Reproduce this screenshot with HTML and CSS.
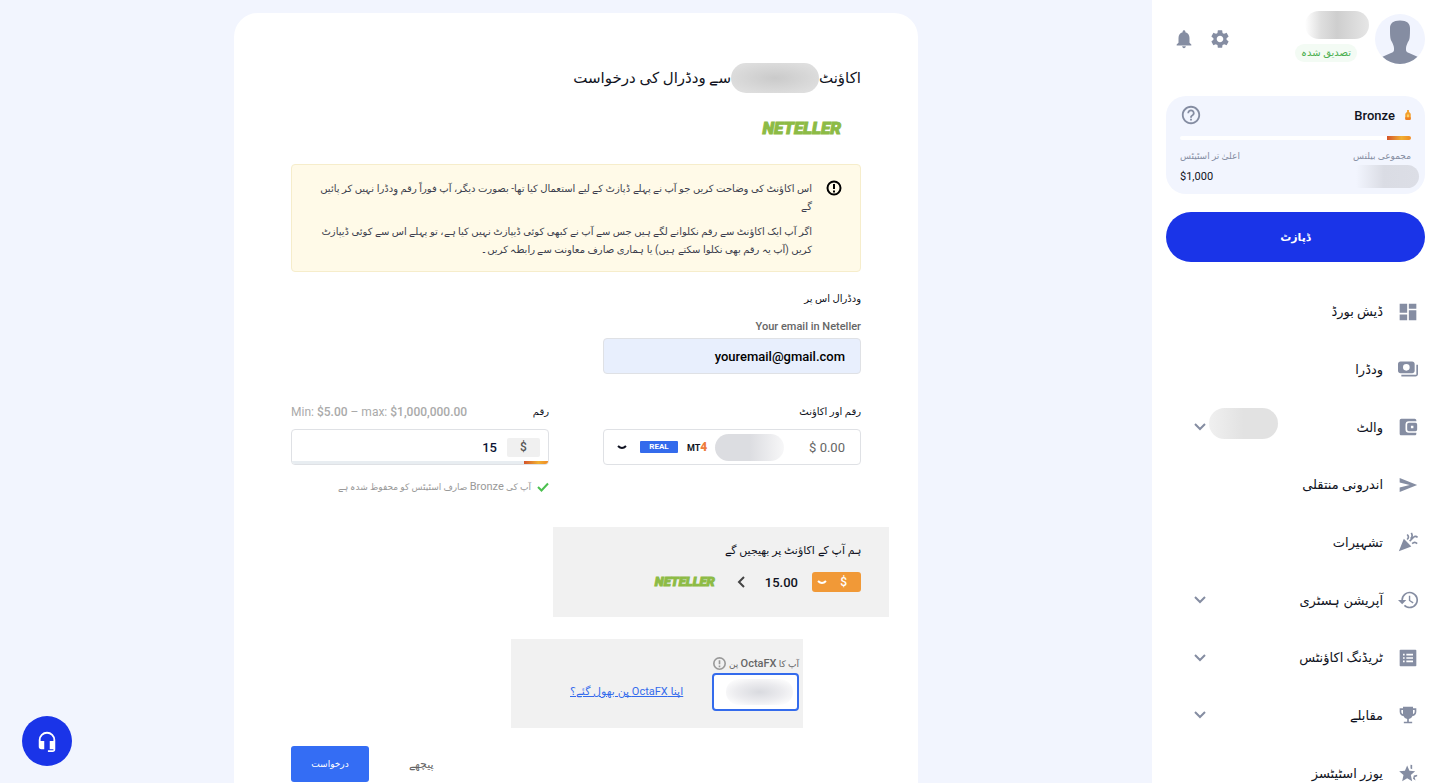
FILE: index.html
```html
<!DOCTYPE html>
<html lang="ur" dir="rtl">
<head>
    <meta charset="UTF-8">
    <meta name="viewport" content="width=device-width, initial-scale=1.0">
    <title>OctaFX</title>
    <link rel="stylesheet" href="styles.css">
</head>
<body>
<div class="page">

    <aside class="sidebar">
        <div class="profile">
            <svg class="avatar" viewBox="0 0 50 50">
                <circle cx="25" cy="25" r="25" fill="#f1f4fe"/>
                <path fill="#858da2" d="M25 6.500c-7 0-10 3-10 7.500 0 4 0 7 .4 10 .4 2.500 1.600 3.500 2.100 5 .8 2.500 1.500 3 1.500 5.500V36c0 1.500-1 2.300-3 3L7.500 42.800A25 25 0 0 0 42.500 42.800L34 39c-2-.7-3-1.500-3-3v-1.500c0-2.500.7-3 1.500-5.500.5-1.500 1.700-2.500 2.100-5 .4-3 .4-6 .4-10 0-4.500-3-7.500-10-7.500z"/>
            </svg>
            <div class="user">
                <span class="mask mask-name"></span>
                <span class="verified">تصدیق شدہ</span>
            </div>
            <button class="icon-btn" aria-label="Settings">
                <svg viewBox="0 0 24 24"><path d="M19.140 12.940c.04-.3.060-.61.060-.94s-.02-.64-.07-.94l2.030-1.580c.18-.14.230-.41.120-.61l-1.920-3.320c-.12-.22-.37-.29-.59-.22l-2.390.96c-.5-.38-1.030-.7-1.620-.94l-.36-2.540c-.04-.24-.24-.41-.48-.41h-3.840c-.24 0-.43.17-.47.41l-.36 2.540c-.59.24-1.130.57-1.620.94l-2.390-.96c-.22-.08-.47 0-.59.22L2.740 8.870c-.12.21-.08.47.12.61l2.030 1.580c-.05.3-.09.630-.09.940s.02.640.07.940l-2.030 1.580c-.18.140-.23.410-.12.610l1.920 3.320c.12.220.37.290.59.220l2.390-.96c.5.380 1.030.7 1.620.940l.36 2.540c.05.240.24.410.48.410h3.840c.24 0 .44-.17.47-.41l.36-2.540c.59-.24 1.130-.56 1.620-.94l2.390.96c.22.080.47 0 .59-.22l1.920-3.320c.12-.22.070-.47-.12-.61l-2.010-1.580zM12 15.600c-1.980 0-3.600-1.620-3.600-3.600s1.620-3.600 3.600-3.600 3.600 1.620 3.600 3.600-1.620 3.600-3.600 3.600z"/></svg>
            </button>
            <button class="icon-btn" aria-label="Notifications">
                <svg viewBox="0 0 24 24"><path d="M12 22c1.100 0 2-.9 2-2h-4c0 1.100.9 2 2 2zm6-6v-5c0-3.070-1.630-5.640-4.500-6.320V4c0-.83-.67-1.500-1.500-1.500s-1.500.67-1.500 1.500v.68C7.640 5.360 6 7.920 6 11v5l-2 2v1h16v-1l-2-2z"/></svg>
            </button>
        </div>

        <section class="status">
            <div class="status-head">
                <svg class="bronze" viewBox="0 0 6 11"><path d="M2 0h2v2l2 2v5.500Q6 11 4.500 11h-3Q0 11 0 9.500V4l2-2z" fill="#f3a02c"/><path d="M0 8h6v1.500Q6 11 4.500 11h-3Q0 11 0 9.500z" fill="#ee7f25"/><path d="M2 5h2v3H2z" fill="#ffd470"/></svg>
                <strong>Bronze</strong>
                <button class="help" aria-label="Help">
                    <svg viewBox="0 0 24 24"><path d="M11 18h2v-2h-2v2zm1-16C6.480 2 2 6.480 2 12s4.480 10 10 10 10-4.480 10-10S17.520 2 12 2zm0 18c-4.410 0-8-3.590-8-8s3.590-8 8-8 8 3.590 8 8-3.590 8-8 8zm0-14c-2.210 0-4 1.790-4 4h2c0-1.100.9-2 2-2s2 .9 2 2c0 2-3 1.750-3 5h2c0-2.250 3-2.500 3-5 0-2.210-1.790-4-4-4z"/></svg>
                </button>
            </div>
            <div class="bar"><span></span></div>
            <div class="status-row">
                <div>
                    <p>مجموعی بیلنس</p>
                    <span class="mask mask-balance"></span>
                </div>
                <div class="next">
                    <p>اعلیٰ تر اسٹیٹس</p>
                    <span dir="ltr">$1,000</span>
                </div>
            </div>
        </section>

        <button class="deposit">ڈپازٹ</button>

        <nav class="menu">
            <a href="#">
                <svg viewBox="0 0 24 24"><path d="M2 2h9v11H2zM13 2h9v6h-9zM2 15h9v7H2zM13 10h9v12h-9z"/></svg>
                <span>ڈیش بورڈ</span>
            </a>
            <a href="#">
                <svg viewBox="0 0 24 24"><path d="M20 14V6c0-1.700-1.300-3-3-3H3C1.300 3 0 4.300 0 6v8c0 1.700 1.300 3 3 3h14c1.700 0 3-1.300 3-3zm-10 0a4 4 0 1 1 0-8 4 4 0 0 1 0 8zM24 7v11c0 1.700-1.300 3-3 3H4v-2h18V7z"/></svg>
                <span>ودڈرا</span>
            </a>
            <a href="#">
                <svg viewBox="0 0 24 24"><path d="M22 5V4c0-1.100-.9-2-2-2H4a2 2 0 0 0-2 2v16c0 1.100.9 2 2 2h16c1.100 0 2-.9 2-2v-1h-9a4 4 0 0 1-4-4V9a4 4 0 0 1 4-4z"/><path d="M13 7h8a2 2 0 0 1 2 2v6a2 2 0 0 1-2 2h-8a2 2 0 0 1-2-2V9c0-1.100.9-2 2-2zm2.500 3.500v3h3v-3z" fill-rule="evenodd"/></svg>
                <span>والٹ</span>
                <i class="mask mask-wallet"></i>
                <svg class="chevron" viewBox="0 0 12 12"><path d="M1 3l5 5 5-5"/></svg>
            </a>
            <a href="#">
                <svg viewBox="0 0 24 24"><path d="M2 20.500L23 12 2 3.500 2 9l12 3-12 3z"/></svg>
                <span>اندرونی منتقلی</span>
            </a>
            <a href="#">
                <svg viewBox="0 0 24 24"><path d="M1 23l15-5.500L7 8z"/><g class="line"><path d="M14 11l5-5c1-1 3-1 4.500.5M17 14c2-2 4-2 6 0M11 9c2-2 2-4 0-6M15 8c3-2 2-5 1-7"/></g></svg>
                <span>تشہیرات</span>
            </a>
            <a href="#">
                <svg viewBox="0 0 24 24"><path d="M14 2C8.500 2 4 6.500 4 12H0l5 5 5-5H6a8 8 0 1 1 2.400 5.700L7 19.100A10 10 0 1 0 14 2zm-1 5v6l4.700 3.200 1-1.500-4-2.500V7z"/></svg>
                <span>آپریشن ہسٹری</span>
                <svg class="chevron" viewBox="0 0 12 12"><path d="M1 3l5 5 5-5"/></svg>
            </a>
            <a href="#">
                <svg viewBox="0 0 24 24"><path fill-rule="evenodd" d="M3 2h18q1 0 1 1v18q0 1-1 1H3q-1 0-1-1V3q0-1 1-1zm3 5v2h2V7zm4 0v2h8V7zm-4 4v2h2v-2zm4 0v2h8v-2zm-4 4v2h2v-2zm4 0v2h8v-2z"/></svg>
                <span>ٹریڈنگ اکاؤنٹس</span>
                <svg class="chevron" viewBox="0 0 12 12"><path d="M1 3l5 5 5-5"/></svg>
            </a>
            <a href="#">
                <svg viewBox="0 0 24 24"><path fill-rule="evenodd" d="M6 2h12v2h4v4c0 3-2 5-4.500 5.300A6 6 0 0 1 13 16.900V20h4v2H7v-2h4v-3.100a6 6 0 0 1-4.500-3.600C4 13 2 11 2 8V4h4zm0 4H4v2c0 1.300.8 2.400 2 2.800zm12 0v4.800c1.200-.4 2-1.500 2-2.800V6z"/></svg>
                <span>مقابلے</span>
                <svg class="chevron" viewBox="0 0 12 12"><path d="M1 3l5 5 5-5"/></svg>
            </a>
            <a href="#">
                <svg viewBox="0 0 24 24"><path d="M11 3l2.700 6.400 6.900.6-5.200 4.500L17 22l-6-3.800L5 22l1.600-7.500L1.400 10l6.900-.6zM15 2l2 .5v5l-2-1zM19 15l4-1v2l-3 1 1 4-3-2z"/></svg>
                <span>یوزر اسٹیٹسز</span>
            </a>
        </nav>
    </aside>

    <main class="content">
        <form class="card">
            <h1>اکاؤنٹ<span class="mask mask-account"></span>سے ودڈرال کی درخواست</h1>
            <div class="neteller">NETELLER</div>

            <div class="notice">
                <svg class="alert" viewBox="0 0 16 16"><circle cx="8" cy="8" r="6.500"/><path d="M8 4v5M8 10.500v2"/></svg>
                <div>
                    <p>اس اکاؤنٹ کی وضاحت کریں جو آپ نے پہلے ڈپازٹ کے لیے استعمال کیا تھا- بصورت دیگر، آپ فوراً رقم وِدڈرا نہیں کر پائیں گے</p>
                    <p>اگر آپ ایک اکاؤنٹ سے رقم نکلوانے لگے ہیں جس سے آپ نے کبھی کوئی ڈیپازٹ نہیں کیا ہے، تو پہلے اس سے کوئی ڈیپازٹ کریں (آپ یہ رقم بھی نکلوا سکتے ہیں) یا ہماری صارف معاونت سے رابطہ کریں۔</p>
                </div>
            </div>

            <h2>ودڈرال اس پر</h2>
            <div class="columns">
                <div class="field">
                    <label class="small" for="email">Your email in Neteller</label>
                    <input class="box email" type="email" id="email" value="youremail@gmail.com" dir="ltr">
                </div>
            </div>

            <div class="columns amounts">
                <div class="field">
                    <div class="caption"><span id="accountLabel">رقم اور اکاؤنٹ</span></div>
                    <button class="box account" type="button" aria-labelledby="accountLabel">
                        <span class="sum" dir="ltr">$ 0.00</span>
                        <span class="mask mask-number"></span>
                        <span class="mt" dir="ltr">MT<b>4</b></span>
                        <span class="real">REAL</span>
                        <svg class="arrow" viewBox="0 0 12 12"><path d="M2 5q4 4 8 0"/></svg>
                    </button>
                </div>
                <div class="field">
                    <div class="caption">
                        <label for="amount">رقم</label>
                        <span class="limits" dir="ltr">Min: <b>$5.00</b> – max: <b>$1,000,000.00</b></span>
                    </div>
                    <div class="box amount">
                        <span class="currency">$</span>
                        <input type="text" id="amount" value="15" dir="ltr">
                        <div class="progress"><span></span></div>
                    </div>
                    <p class="saved">
                        <svg viewBox="0 0 12 12"><path d="M1 6l3.500 3.500L11 2.500"/></svg>
                        <span>آپ کی <b>Bronze</b> صارف اسٹیٹس کو محفوظ شدہ ہے</span>
                    </p>
                </div>
            </div>

            <section class="send">
                <h2>ہم آپ کے اکاؤنٹ پر بھیجیں گے</h2>
                <div class="send-row">
                    <button class="rate" type="button">
                        <span>$</span>
                        <svg class="arrow" viewBox="0 0 12 12"><path d="M2 5q4 4 8 0"/></svg>
                    </button>
                    <strong>15.00</strong>
                    <svg class="back-arrow" viewBox="0 0 12 12"><path d="M8 1L3 6l5 5"/></svg>
                    <div class="neteller">NETELLER</div>
                </div>
            </section>

            <section class="pin">
                <div>
                    <label class="pin-label" for="pin"><span>آپ کا <b>OctaFX</b> پن</span>
                        <svg viewBox="0 0 16 16"><circle cx="8" cy="8" r="7"/><path d="M8 4v5M8 10.500v2"/></svg>
                    </label>
                    <div class="pin-box">
                        <input type="password" id="pin">
                        <span class="mask mask-pin"></span>
                    </div>
                </div>
                <a class="forgot" href="#">اپنا OctaFX پن بھول گئے؟</a>
            </section>

            <div class="actions">
                <button class="plain" type="button">پیچھے</button>
                <button class="submit" type="submit">درخواست</button>
            </div>
        </form>
    </main>

    <button class="support" aria-label="Support">
        <svg viewBox="0 0 24 24"><path d="M12 2a9 9 0 0 0-9 9v7a3 3 0 0 0 3 3h3v-9H5v-1a7 7 0 0 1 14 0v1h-4v9h4v1h-6v2h5a3 3 0 0 0 3-3V11a9 9 0 0 0-9-9z"/></svg>
    </button>
</div>
</body>
</html>
```
FILE: styles.css
```css
* {
    margin: 0;
    padding: 0;
    box-sizing: border-box;
}

body {
    background: #f2f5fe;
    color: #101322;
    font-family: Roboto, "DejaVu Sans", sans-serif;
    font-size: 12px;
}

button, input {
    font: inherit;
    color: inherit;
    border: none;
    background: none;
    outline: none;
}

button {
    cursor: pointer;
}

.page {
    display: flex;
    height: 100vh;
    overflow: hidden;
}

/* ====== sidebar ====== */
.sidebar {
    flex: 0 0 277px;
    padding: 11px 4px 0 14px;
    background: white;
}

.profile {
    display: flex;
    height: 56px;
    align-items: center;
}

.avatar {
    width: 50px;
    height: 50px;
}

.user {
    flex: 1;
    align-self: flex-start;
    display: flex;
    flex-direction: column;
    align-items: flex-start;
    gap: 5px;
    padding-right: 6px;
}

.verified {
    margin-right: 12px;
    padding: 0 6px;
    border-radius: 9px;
    background: #f3fbf4;
    color: #4caf50;
    font-size: 10px;
    line-height: 18px;
}

.icon-btn {
    width: 22px;
    height: 22px;
    margin-left: 14px;
}

.icon-btn:last-child {
    margin-left: 7px;
}

.icon-btn svg, .help svg {
    display: block;
    width: 100%;
    fill: #858da2;
}

/* hidden personal data */
.mask {
    display: inline-block;
    flex-shrink: 0;
    border-radius: 16px;
}

.mask-name {
    width: 64px;
    height: 28px;
    background: linear-gradient(to left, #e6e6e6, #cecece 50%, #dedede 75%, white);
}

.mask-balance {
    width: 70px;
    height: 23px;
    margin-right: -8px;
    background: linear-gradient(to left, #dcdee6, #dadce4 50%, #f2f5fe 90%);
}

.mask-wallet {
    width: 69px;
    height: 31px;
    margin-bottom: 8px;
    background: linear-gradient(to left, #e2e2e2, #e2e2e2 50%, #f0f0f0);
}

.mask-account {
    width: 88px;
    height: 30px;
    background: radial-gradient(ellipse, #cacaca, #dedede 80%);
}

.mask-number {
    width: 69px;
    height: 27px;
    margin-left: 8px;
    background: linear-gradient(to left, #dcdde1, #dcdde1);
    background: linear-gradient(to left, #f7f7f8, #dcdde1 50%, #dcdde1);
}

.status {
    margin-top: 29px;
    padding: 8px 14px 0;
    height: 98px;
    border-radius: 20px;
    background: #f2f5fe;
}

.status-head {
    display: flex;
    align-items: center;
    height: 22px;
    gap: 10px;
    font-size: 13px;
}

.status-head strong {
    flex: 1;
    font-weight: 500;
}

.bronze {
    width: 6px;
    height: 10px;
}

.help {
    width: 22px;
    height: 22px;
}

.bar {
    margin-top: 10px;
    height: 4px;
    border-radius: 2px;
    background: white;
    overflow: hidden;
}

.bar span, .progress span {
    display: block;
    width: 24px;
    height: 100%;
    background: linear-gradient(to left, #f08a24, #f0b033 40%, #d4532a);
}

.status-row {
    display: flex;
    justify-content: space-between;
    padding-top: 8px;
    font-size: 11px;
}

.status-row p {
    height: 17px;
    line-height: 17px;
    font-size: 9px;
    color: #858da2;
}

.next {
    text-align: left;
    line-height: 24px;
}

.deposit {
    display: block;
    width: 100%;
    height: 50px;
    margin-top: 18px;
    border-radius: 25px;
    background: #1a34e8;
    color: white;
    font-size: 11px;
    font-weight: 700;
}

.menu {
    display: grid;
    grid-template-rows: repeat(9, 1fr);
    height: 519px;
    margin-top: 21px;
}

.menu a {
    display: flex;
    align-items: center;
    padding: 0 7px 0 28px;
    color: #101322;
    font-size: 13px;
    text-decoration: none;
}

.menu a > svg {
    width: 20px;
    height: 20px;
    fill: #858da2;
}

.menu span {
    flex: 1;
    padding-right: 15px;
}

.menu a > .chevron {
    width: 12px;
    height: 12px;
    margin-right: 3px;
    fill: none;
    stroke: #858da2;
    stroke-width: 2;
}

.menu .line {
    fill: none;
    stroke: #858da2;
    stroke-width: 2;
}

/* ====== withdrawal form ====== */
.content {
    flex: 1;
    padding-top: 13px;
}

.card {
    width: 684px;
    max-width: 100%;
    min-height: 100vh;
    margin: 0 auto;
    padding: 50px 57px;
    border-radius: 24px;
    background: white;
}

h1 {
    display: flex;
    align-items: center;
    height: 30px;
    font-size: 15px;
    font-weight: 400;
}

h2 {
    font-size: 10px;
    font-weight: 400;
    line-height: 18px;
}

.neteller {
    color: #8dbb45;
    font-size: 17px;
    font-style: italic;
    font-weight: 900;
    line-height: 20px;
    -webkit-text-stroke: 1px #8dbb45;
}

.card > .neteller {
    margin: 25px 20px 26px;
}

.notice {
    display: flex;
    align-items: flex-start;
    gap: 14px;
    padding: 15px 18px 12px;
    border: 1px solid #f6edcb;
    border-radius: 4px;
    background: #fffae8;
    color: #3b3e4d;
    font-size: 10px;
    line-height: 18px;
}

.notice > div {
    flex: 1;
}

.notice p + p {
    margin-top: 7px;
}

.alert {
    width: 16px;
    height: 16px;
    fill: none;
    stroke: black;
    stroke-width: 2;
}

.card > h2 {
    margin-top: 18px;
}

.columns {
    display: grid;
    grid-template-columns: 1fr 1fr;
    gap: 54px;
}

.field .small {
    display: block;
    margin-top: 10px;
    color: #666;
    font-size: 11px;
    font-weight: 500;
    line-height: 18px;
}

.box {
    display: flex;
    align-items: center;
    width: 100%;
    height: 36px;
    border: 1px solid #dfe1e5;
    border-radius: 4px;
}

.email {
    margin-top: 2px;
    padding: 0 15px;
    background: #e8effd;
    color: black;
    font-size: 13px;
    font-weight: 500;
    text-align: right;
}

.amounts {
    margin-top: 29px;
}

.caption {
    display: flex;
    justify-content: space-between;
    margin-bottom: 8px;
    font-size: 10px;
    line-height: 18px;
}

.limits {
    color: #aaa;
    font-size: 12px;
}

.limits b {
    font-weight: 500;
}

.account {
    padding: 0 15px 0 12px;
}

.sum {
    flex: 1;
    color: #666;
    font-size: 13px;
    text-align: right;
    white-space: nowrap;
}

.mt {
    font-size: 9px;
    font-weight: 700;
}

.mt b {
    color: #ee7d3b;
    font-size: 12px;
}

.real {
    width: 38px;
    margin: 0 9px 0 12px;
    border-radius: 1px;
    background: #346bec;
    color: white;
    font-size: 8px;
    font-weight: 700;
    line-height: 12px;
}

.arrow {
    width: 12px;
    height: 12px;
    fill: none;
    stroke: currentColor;
    stroke-width: 2;
}

.amount {
    position: relative;
    padding: 0 8px;
    overflow: hidden;
}

.currency {
    width: 33px;
    border-radius: 2px;
    background: #f0f0f0;
    color: #555;
    font-weight: 500;
    line-height: 19px;
    text-align: center;
}

.amount input {
    flex: 1;
    min-width: 0;
    padding: 0 10px;
    color: #0c1536;
    font-size: 13px;
    font-weight: 500;
    text-align: right;
}

.progress {
    position: absolute;
    right: 0;
    bottom: 0;
    left: 0;
    height: 3px;
    background: #e8edf1;
}

.saved {
    display: flex;
    align-items: center;
    gap: 6px;
    margin-top: 13px;
    color: #999;
    font-size: 9px;
    line-height: 18px;
}

.saved b {
    font-size: 11px;
    font-weight: 400;
}

.saved svg {
    width: 12px;
    height: 12px;
    fill: none;
    stroke: #4bc04f;
    stroke-width: 2;
}

.send {
    width: 336px;
    height: 90px;
    margin: 31px -28px 0 0;
    padding: 15px 28px;
    background: #f1f1f1;
}

.send h2 {
    font-size: 11px;
}

.send-row {
    display: flex;
    align-items: center;
    margin-top: 12px;
}

.rate {
    display: flex;
    align-items: center;
    justify-content: space-between;
    width: 49px;
    height: 20px;
    padding: 0 14px 0 4px;
    border-radius: 3px;
    background: #f19937;
    color: white;
    font-weight: 500;
}

.send-row strong {
    margin: 0 14px 0 17px;
    font-size: 13px;
    font-weight: 500;
}

.back-arrow {
    width: 12px;
    height: 12px;
    margin-left: 21px;
    fill: none;
    stroke: #444;
    stroke-width: 2;
}

.send .neteller {
    font-size: 13px;
}

.pin {
    display: flex;
    justify-content: space-between;
    width: 292px;
    height: 89px;
    margin: 22px 58px 0 0;
    padding: 14px 4px 0 59px;
    background: #f1f1f1;
}

.pin-label {
    display: flex;
    align-items: center;
    gap: 3px;
    height: 20px;
    color: #666;
    font-size: 9px;
}

.pin-label b {
    font-size: 11px;
    font-weight: 500;
}

.pin-label svg {
    width: 13px;
    height: 13px;
    fill: none;
    stroke: #999;
    stroke-width: 2;
}

.pin-box {
    position: relative;
    width: 87px;
    height: 38px;
    border: 2px solid #346bec;
    border-radius: 4px;
    background: white;
}

.pin-box input {
    width: 100%;
    height: 100%;
    padding: 0 10px;
}

.mask-pin {
    position: absolute;
    inset: 4px 4px 4px 12px;
    background: radial-gradient(ellipse, #d9dadf, #ececef 50%, transparent 90%);
}

.forgot {
    margin-top: 30px;
    color: #346bec;
    font-size: 11px;
    line-height: 18px;
}

.actions {
    display: flex;
    justify-content: flex-end;
    align-items: center;
    gap: 40px;
    margin-top: 18px;
}

.plain {
    color: #666;
    font-size: 11px;
}

.submit {
    width: 78px;
    height: 36px;
    border-radius: 3px;
    background: #346df4;
    color: white;
    font-size: 9px;
}

/* ====== support chat ====== */
.support {
    position: fixed;
    bottom: 17px;
    left: 22px;
    display: flex;
    align-items: center;
    justify-content: center;
    width: 50px;
    height: 50px;
    border-radius: 50%;
    background: #1a34e8;
}

.support svg {
    width: 22px;
    height: 22px;
    fill: white;
}
```
